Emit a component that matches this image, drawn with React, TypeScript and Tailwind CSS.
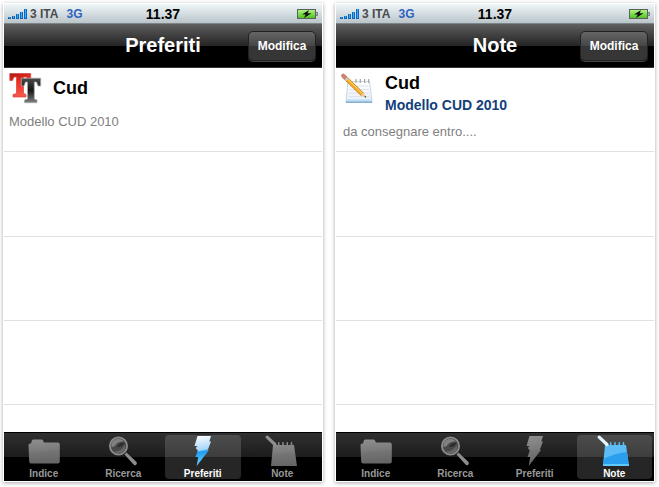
import { useId, type ReactNode } from "react";

type TabName = "Indice" | "Ricerca" | "Preferiti" | "Note";

const tabs: TabName[] = ["Indice", "Ricerca", "Preferiti", "Note"];

function SignalIcon() {
  return (
    <svg width="19" height="10" viewBox="0 0 19 10" aria-hidden="true">
      {[2, 3, 5, 7, 10].map((h, i) => (
        <g key={h}>
          <rect x={i * 4} y={10 - h} width="3" height={h} fill="#0f62bd" />
          <rect x={i * 4 + 1} y={10 - h} width="1" height={h - 1} fill="#35b0f5" />
        </g>
      ))}
    </svg>
  );
}

function BatteryIcon() {
  const id = useId();
  return (
    <svg width="21" height="10" viewBox="0 0 21 10" aria-hidden="true">
      <defs>
        <linearGradient id={id} x2="0" y2="1">
          <stop offset="0" stopColor="#b9ee91" />
          <stop offset=".5" stopColor="#7be048" />
          <stop offset="1" stopColor="#4fbb25" />
        </linearGradient>
      </defs>
      <rect x=".5" y=".5" width="18" height="9" fill={`url(#${id})`} stroke="#59635c" />
      <path d="M19 3.5h1.5v3H19" fill="#a9b2b5" stroke="#66707a" strokeWidth=".8" />
      <path d="M12 1 5 5.600h3.600L7 9l7.500-4.800h-3.900z" fill="#111" />
    </svg>
  );
}

function TabIcon({ name, active }: { name: TabName; active: boolean }) {
  const id = useId();
  const fill = `url(#${id})`;
  return (
    <svg width="36" height="34" viewBox="0 0 36 34" aria-hidden="true">
      <defs>
        <linearGradient id={id} x2="0.1" y2="1">
          <stop offset="0" stopColor={active ? "#ffffff" : "#8f8f8f"} />
          <stop offset=".5" stopColor={active ? "#a6d6fa" : "#7a7a7a"} />
          <stop offset=".56" stopColor={active ? "#1d9cf0" : "#747474"} />
          <stop offset="1" stopColor={active ? "#6bd4ff" : "#666666"} />
        </linearGradient>
      </defs>
      {name === "Indice" && (
        <path
          d="M2.500 10.500Q2.500 8.500 4 8.500H5L5.800 5.700Q6.200 4.500 7.500 4.500H15.500Q16.500 4.500 17 5.500L18 7.500H32Q33.800 7.500 33.800 9.500V26.500Q33.800 28.500 32 28.500H5Q3.200 28.500 3.200 26.500Z"
          fill={fill}
        />
      )}
      {name === "Ricerca" && (
        <>
          <path d="M21.500 17.500 31.500 27Q32.500 28.500 31.200 29.700 29.800 31 28.500 29.600L19.500 19.500Z" fill="#8c8c8c" />
          <circle cx="13.500" cy="11" r="8.600" fill="#484848" stroke="#8c8c8c" strokeWidth="1.800" />
          <path d="M6.500 12Q5.500 5.500 11.500 4q5-1 7.500 2.500-6-.5-8.500 3.500Q9 12.500 6.500 12Z" fill="#808080" />
          <path d="M8.500 16.500q7 .5 11.500-6.500 1 7-4.500 8.500-4 .5-7-2Z" fill="#666" />
          <path d="M12 12q2-4.500 7.500-4.500-2 5-7.500 4.500Z" fill="#2c2c2c" />
        </>
      )}
      {name === "Preferiti" && (
        <path d="M12.500 1H26L24.300 6.500H26L22.800 15H24L11.700 31 13.200 22H10.500L12.800 15.500 10.700 13 12.500 11H9.500Z" fill={fill} />
      )}
      {name === "Note" && (
        <>
          <path
            d="M9 10H14V8Q14.700 5.500 15.500 8V10H18.200V8Q19 5.500 19.800 8V10H22.500V8Q23.200 5.500 24 8V10H26.700V8Q27.500 5.500 28.300 8V10H30L33 31H7Z"
            fill={active ? "#5cbcf5" : fill}
          />
          {active && <path d="M7.600 24Q18 18.500 31 17L33 31H7Z" fill="#2a9fee" />}
          {active && <path d="M7.200 29H32.800L33 31H7Z" fill="#62c9fb" />}
          <path d="M3.200 2.200 11 9.500" stroke={active ? "#e8f4fd" : "#8f8f8f"} strokeWidth="3.200" strokeLinecap="round" />
        </>
      )}
    </svg>
  );
}

function LettersIcon() {
  const id = useId();
  return (
    <svg width="33" height="32" viewBox="0 0 33 32" aria-hidden="true">
      <defs>
        <linearGradient id={`${id}r`} x2=".3" y2="1">
          <stop offset="0" stopColor="#a81a16" />
          <stop offset=".4" stopColor="#ee2a1e" />
          <stop offset="1" stopColor="#f8564a" />
        </linearGradient>
        <linearGradient id={`${id}k`} x2="0" y2="1">
          <stop offset="0" stopColor="#4a4a4a" />
          <stop offset=".5" stopColor="#161616" />
          <stop offset="1" stopColor="#808080" />
        </linearGradient>
      </defs>
      <path
        d="M.8 1.500H21.700V8.500H19L17.500 5H14.500V21.500L17 22.500V25H4V22.500L7.500 21.500V5H5L3.500 8.500H.8Z"
        fill={`url(#${id}r)`}
        stroke="#d0453c"
        strokeWidth=".7"
      />
      <path
        d="M12.300 6.200H31.700V14H29L27.500 10H25.300V27L28 28V30.700H15.500V28L18.500 27V10H16.500L15 14H12.300Z"
        fill={`url(#${id}k)`}
        stroke="#aaa"
        strokeWidth=".8"
      />
    </svg>
  );
}

function NotepadIcon() {
  const id = useId();
  return (
    <svg width="34" height="33" viewBox="0 0 34 33" aria-hidden="true">
      <defs>
        <linearGradient id={id} x2="0" y2="1">
          <stop offset="0" stopColor="#fff" />
          <stop offset="1" stopColor="#e9eef7" />
        </linearGradient>
      </defs>
      <path d="M7 9.500H28.500L31 29.500H5Z" fill={`url(#${id})`} stroke="#b9cbdc" strokeWidth=".8" />
      <path d="M4.800 29.300H31.200V30.800H4.800Z" fill="#6c9cc8" />
      <path d="M5.500 27.500H30.500L31 29.500H5Z" fill="#bcdcf1" />
      <path d="M9 14h18.500M8.500 17.500h19.500M8 21h20.500M8 24.500h21" stroke="#d8deea" strokeWidth=".8" />
      <path d="M15 11V7M19.300 11V7M23.600 11V7M27.700 11V7" stroke="#a5a5a5" strokeWidth="1.200" />
      <path d="M3 4.500 21.500 22.500" stroke="#c07a22" strokeWidth="4" />
      <path d="M3 4.500 21.500 22.500" stroke="#f5ad25" strokeWidth="3" />
      <path d="M3.500 4 22 22" stroke="#ffdc70" strokeWidth="1" />
      <path d="M2.200 3.700 4.300 5.700" stroke="#cf8272" strokeWidth="4" strokeLinecap="round" />
      <path d="M5 6.400 6.200 7.600" stroke="#c9cdd1" strokeWidth="4" />
      <path d="m20 24 3-3 2 4.500Z" fill="#ebcd9f" />
      <path d="m23.200 25 1.300-1.300.8 2.100Z" fill="#333" />
    </svg>
  );
}

type PhoneProps = {
  title: string;
  activeTab: TabName;
  children: ReactNode;
};

function Phone({ title, activeTab, children }: PhoneProps) {
  return (
    <section className="flex min-w-0 flex-1 flex-col border border-white bg-white shadow-[0_1px_4px_rgba(0,0,0,0.35)]">
      <div className="grid h-5 grid-cols-[1fr_auto_1fr] items-center border-b border-[#7c8489] bg-linear-to-b from-[#f0f6f8] to-[#bac5ca] pr-1 pl-1">
        <div className="flex items-center text-xs whitespace-nowrap">
          <SignalIcon />
          <span className="ml-[3px] font-bold text-[#4b4b4b]">3 ITA</span>
          <span className="ml-2 font-bold text-[#2f62bf]">3G</span>
        </div>
        <time className="text-center text-sm leading-none font-bold">11.37</time>
        <div className="flex justify-end">
          <BatteryIcon />
        </div>
      </div>

      <header className="grid h-11 grid-cols-[1fr_auto_1fr] items-center border-b border-[#333] bg-linear-to-b from-[#606060] from-0% via-[#252525] via-50% to-black to-51% px-1.5">
        <h1 className="col-start-2 pb-0.5 text-xl leading-none font-bold text-white">{title}</h1>
        <button
          type="button"
          className="h-[30px] w-[68px] justify-self-end rounded-[5px] border border-[#222] bg-linear-to-b from-[#666] via-[#454545] via-50% to-[#363636] to-51% text-xs font-bold text-white shadow-[0_1px_0_#444]"
        >
          Modifica
        </button>
      </header>

      <ul className="h-[364px] overflow-hidden">
        <li className="h-[84px] border-b border-[#e0e0e0]">{children}</li>
        <li className="h-[85px] border-b border-[#e0e0e0]" />
        <li className="h-[84px] border-b border-[#e0e0e0]" />
        <li className="h-[84px] border-b border-[#e0e0e0]" />
      </ul>

      <nav className="grid h-[49px] grid-cols-4 border-t border-black bg-linear-to-b from-[#303030] from-0% via-[#1c1c1c] via-50% to-black to-51%">
        {tabs.map((tab) => {
          const active = tab === activeTab;
          return (
            <button
              key={tab}
              type="button"
              aria-current={active ? "page" : undefined}
              className={`m-0.5 flex flex-col items-center rounded text-[10px] leading-[10px] font-bold ${
                active ? "bg-white/15 text-white" : "text-[#999]"
              }`}
            >
              <TabIcon name={tab} active={active} />
              {tab}
            </button>
          );
        })}
      </nav>
    </section>
  );
}

export default function App() {
  return (
    <main className="flex gap-3 bg-white pt-[3px] pr-1 pb-[5px] pl-[3px] font-['Liberation_Sans',Arial,sans-serif] text-black">
      <Phone title="Preferiti" activeTab="Preferiti">
        <article className="px-[5px] pt-1">
          <div className="flex items-center gap-[11px]">
            <LettersIcon />
            <h2 className="text-lg leading-8 font-bold">Cud</h2>
          </div>
          <p className="mt-2 text-[13px] leading-5 text-[#808080]">Modello CUD 2010</p>
        </article>
      </Phone>
      <Phone title="Note" activeTab="Note">
        <article className="px-[5px] pt-1">
          <div className="flex gap-2.5">
            <NotepadIcon />
            <div>
              <h2 className="text-lg leading-[22px] font-bold">Cud</h2>
              <p className="text-sm leading-[22px] font-bold text-[#143f7b]">Modello CUD 2010</p>
            </div>
          </div>
          <p className="mt-1.5 ml-0.5 text-[13px] leading-5 text-[#808080]">da consegnare entro....</p>
        </article>
      </Phone>
    </main>
  );
}
